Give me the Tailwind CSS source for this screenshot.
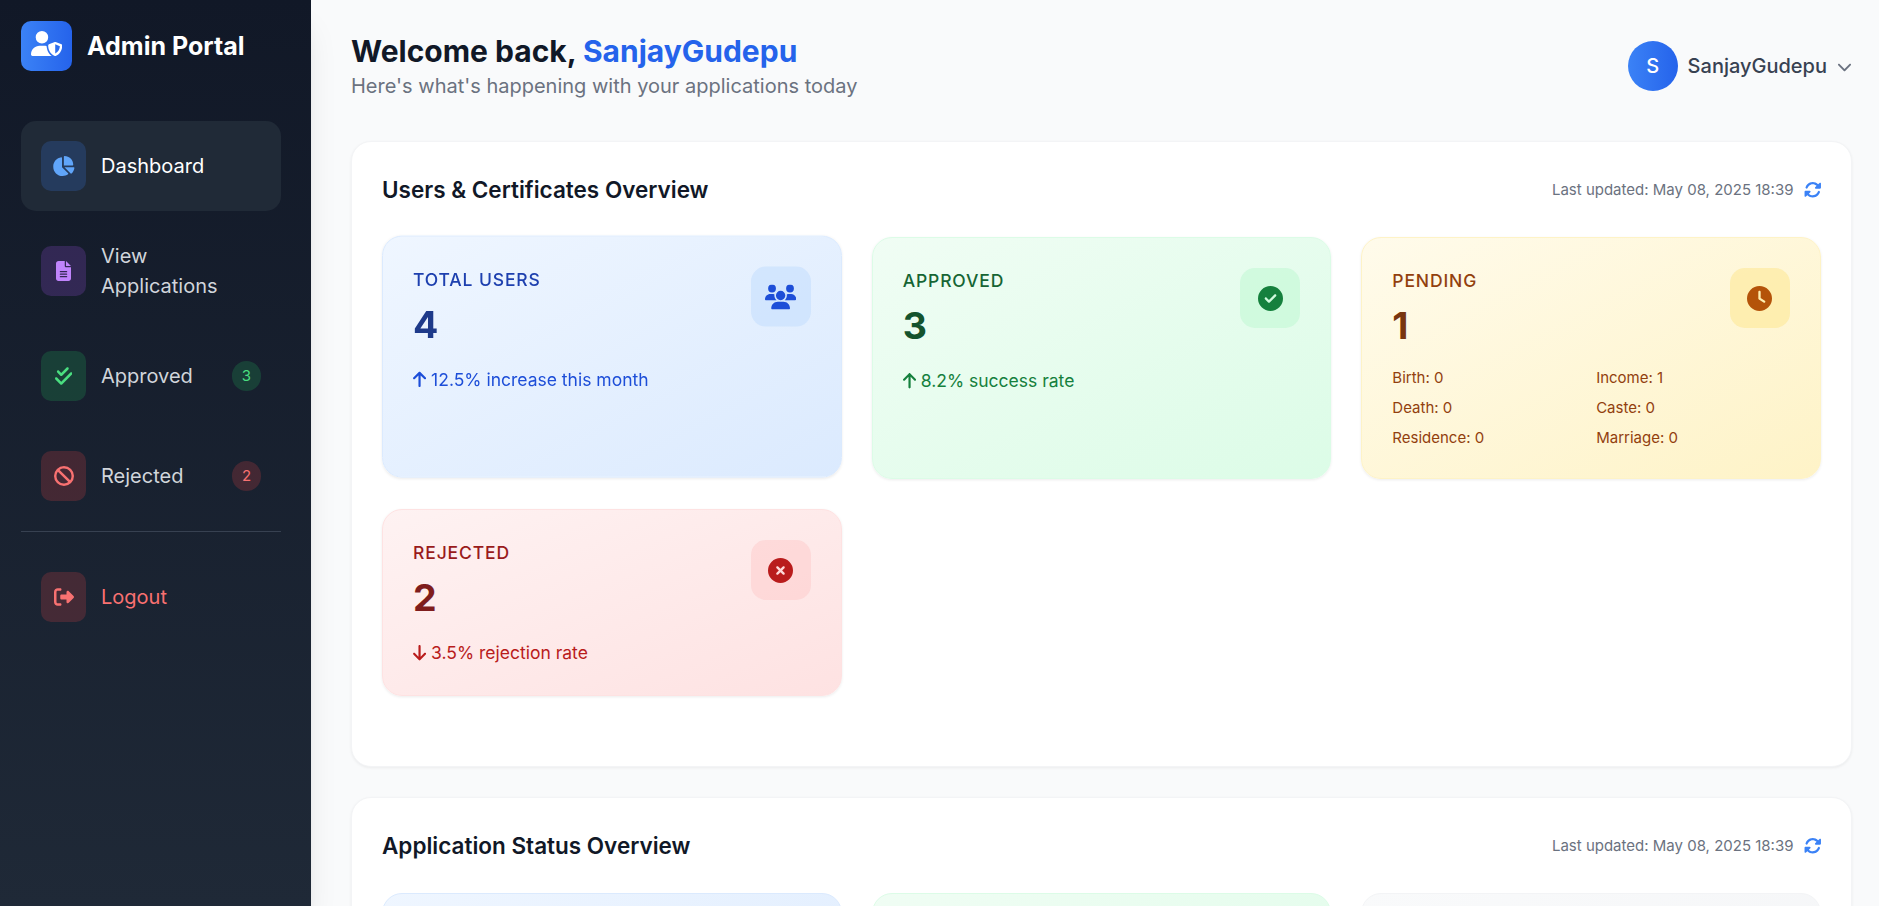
<!DOCTYPE html>
<html lang="en" class="text-[20px]">
<head>
<meta charset="utf-8">
<title>Admin Portal</title>
<script src="https://cdn.jsdelivr.net/npm/@tailwindcss/browser@4"></script>
</head>
<body class="flex h-[906px] overflow-hidden bg-[#f9fafb] font-[Inter,sans-serif] text-[20px] leading-[30px]">
<svg class="hidden">
  <symbol id="rotate" viewBox="0 0 512 512"><path d="M142.900 142.900c62.200-62.200 162.700-62.500 225.300-1L327 183c-6.900 6.900-8.900 17.200-5.200 26.200s12.500 14.800 22.200 14.800H472c13.300 0 24-10.700 24-24V72c0-9.700-5.800-18.500-14.800-22.200s-19.300-1.700-26.200 5.200L413.400 96.600c-87.600-86.500-228.700-86.200-315.800 1C73.200 122 55.600 150.700 44.800 181.400c-5.900 16.700 2.900 34.900 19.500 40.800s34.900-2.900 40.800-19.500c7.700-21.800 20.200-42.300 37.800-59.800zM16 312V440c0 9.700 5.800 18.500 14.800 22.200s19.300 1.700 26.200-5.200l41.600-41.600c87.600 86.500 228.700 86.200 315.800-1c24.400-24.400 42.100-53.100 52.900-83.700c5.900-16.700-2.900-34.900-19.500-40.800s-34.900 2.900-40.800 19.500c-7.700 21.800-20.200 42.300-37.800 59.800c-62.200 62.200-162.700 62.500-225.300 1L185 329c6.900-6.900 8.900-17.200 5.200-26.200s-12.500-14.800-22.200-14.800H40c-13.300 0-24 10.700-24 24z"/></symbol>
  <symbol id="arrow-up" viewBox="0 0 384 512"><path d="M214.600 41.400c-12.500-12.500-32.800-12.500-45.300 0l-160 160c-12.500 12.500-12.500 32.800 0 45.300s32.800 12.500 45.300 0L160 141.200V448c0 17.700 14.300 32 32 32s32-14.300 32-32V141.200L329.400 246.600c12.500 12.500 32.800 12.500 45.300 0s12.500-32.800 0-45.300l-160-160z"/></symbol>
</svg>

<aside class="relative z-10 flex h-full w-[311px] shrink-0 flex-col bg-linear-to-b/srgb from-[#111827] to-[#1f2937] pt-[21px] pr-[30px] pl-[21px] shadow-[0_25px_31px_-6px_rgba(0,0,0,0.1),0_10px_12px_-7px_rgba(0,0,0,0.1)]">
  <div class="flex items-center gap-[15px]">
    <div class="h-[50px] w-[51px] rounded-[10px] bg-linear-to-r/srgb from-[#3b82f6] to-[#2563eb] p-2">
      <svg class="h-[25px] w-[31.25px] text-white" viewBox="0 0 640 512" fill="currentColor"><path d="M224 256A128 128 0 1 0 224 0a128 128 0 1 0 0 256zm-45.700 48C79.800 304 0 383.800 0 482.300C0 498.700 13.300 512 29.700 512H418.300c1.800 0 3.500-.2 5.300-.5c-76.300-55.100-99.800-141-103.100-200.200c-16.100-4.800-33.100-7.300-50.700-7.300H178.300zm308.800-78.300l-120 48C358 277.400 352 286.200 352 296c0 63.300 25.900 168.800 134.800 214.200c5.900 2.500 12.600 2.500 18.500 0C614.100 464.800 640 359.300 640 296c0-9.800-6-18.600-15.100-22.300l-120-48c-5.700-2.300-12.100-2.300-17.800 0zM591.400 312c-3.900 50.700-27.200 116.700-95.400 149.700V273.800L591.400 312z"/></svg>
    </div>
    <span class="text-[25px] leading-[35px] font-bold whitespace-nowrap text-white">Admin Portal</span>
  </div>

  <nav class="mt-[50px] flex flex-col gap-2">
    <a class="flex items-center rounded-[15px] bg-[#202a37] p-4">
      <span class="flex h-[50px] w-[45px] items-center justify-center rounded-[10px] bg-[#3b82f6]/20 text-[#60a5fa]">
        <svg class="h-[20px] w-[22.5px]" viewBox="0 0 576 512" fill="currentColor"><path d="M304 240V16.600c0-9 7-16.600 16-16.600C443.700 0 544 100.300 544 224c0 9-7.600 16-16.600 16H304zM32 272C32 150.700 122.100 50.300 239 34.300c9.200-1.300 17 6.100 17 15.400V288L412.500 444.500c6.700 6.700 6.200 17.700-1.500 23.100C371.800 495.600 323.800 512 272 512C139.500 512 32 404.600 32 272zm526.400 16c9.300 0 16.600 7.800 15.400 17c-7.700 55.900-34.600 105.600-73.900 142.300c-6 5.600-15.400 5.200-21.200-.7L320 288H558.400z"/></svg>
      </span>
      <span class="ml-3 text-white">Dashboard</span>
    </a>
    <a class="flex items-center rounded-[15px] p-4">
      <span class="flex h-[50px] w-[45px] shrink-0 items-center justify-center rounded-[10px] bg-[#a855f7]/20 text-[#c084fc]">
        <svg class="h-[20px] w-[15px]" viewBox="0 0 384 512" fill="currentColor"><path d="M64 0C28.700 0 0 28.700 0 64V448c0 35.300 28.700 64 64 64H320c35.300 0 64-28.700 64-64V160H256c-17.700 0-32-14.300-32-32V0H64zM256 0V128H384L256 0zM112 256H272c8.800 0 16 7.200 16 16s-7.200 16-16 16H112c-8.800 0-16-7.200-16-16s7.200-16 16-16zm0 64H272c8.800 0 16 7.200 16 16s-7.200 16-16 16H112c-8.800 0-16-7.200-16-16s7.200-16 16-16zm0 64H272c8.800 0 16 7.200 16 16s-7.200 16-16 16H112c-8.800 0-16-7.200-16-16s7.200-16 16-16z"/></svg>
      </span>
      <span class="ml-3 text-[#d1d5db]">View<br>Applications</span>
    </a>
    <a class="flex items-center rounded-[15px] p-4">
      <span class="flex h-[50px] w-[45px] items-center justify-center rounded-[10px] bg-[#22c55e]/20 text-[#4ade80]">
        <svg class="h-[20px] w-[17.5px]" viewBox="0 0 448 512" fill="currentColor"><path d="M342.600 86.600c12.500-12.500 12.500-32.800 0-45.300s-32.800-12.500-45.300 0L160 178.700l-57.400-57.400c-12.500-12.500-32.800-12.500-45.300 0s-12.500 32.800 0 45.300l80 80c12.500 12.500 32.800 12.500 45.300 0l160-160zm96 128c12.500-12.500 12.500-32.800 0-45.300s-32.800-12.500-45.300 0L160 402.700 54.600 297.400c-12.500-12.500-32.800-12.500-45.300 0s-12.500 32.800 0 45.300l128 128c12.500 12.500 32.800 12.500 45.300 0l256-256z"/></svg>
      </span>
      <span class="ml-3 text-[#d1d5db]">Approved</span>
      <span class="ml-auto flex h-[30px] w-[29px] items-center justify-center rounded-full bg-[#22c55e]/20 text-[15px] text-[#4ade80]">3</span>
    </a>
    <a class="flex items-center rounded-[15px] p-4">
      <span class="flex h-[50px] w-[45px] items-center justify-center rounded-[10px] bg-[#ef4444]/20 text-[#f87171]">
        <svg class="size-[20px]" viewBox="0 0 512 512" fill="currentColor"><path d="M367.200 412.500L99.500 144.800C77.100 176.100 64 214.500 64 256c0 106 86 192 192 192c41.500 0 79.900-13.100 111.200-35.500zm45.300-45.300C434.900 335.900 448 297.500 448 256c0-106-86-192-192-192c-41.500 0-79.900 13.100-111.200 35.500L412.500 367.200zM0 256a256 256 0 1 1 512 0A256 256 0 1 1 0 256z"/></svg>
      </span>
      <span class="ml-3 text-[#d1d5db]">Rejected</span>
      <span class="ml-auto flex h-[30px] w-[29px] items-center justify-center rounded-full bg-[#ef4444]/20 text-[15px] text-[#f87171]">2</span>
    </a>
  </nav>

  <div class="mt-2 border-t border-[#374151] pt-4">
    <a class="flex items-center rounded-[15px] p-4">
      <span class="flex h-[50px] w-[45px] items-center justify-center rounded-[10px] bg-[#ef4444]/20 text-[#f87171]">
        <svg class="size-[20px]" viewBox="0 0 512 512" fill="currentColor"><path d="M377.900 105.900L500.700 228.700c7.200 7.200 11.300 17.100 11.300 27.300s-4.100 20.100-11.300 27.300L377.900 406.100c-6.400 6.400-15 9.900-24 9.900c-18.700 0-33.900-15.200-33.900-33.900l0-62.100-128 0c-17.700 0-32-14.300-32-32l0-64c0-17.700 14.300-32 32-32l128 0 0-62.100c0-18.700 15.200-33.900 33.900-33.900c9 0 17.600 3.600 24 9.900zM160 96L96 96c-17.700 0-32 14.300-32 32l0 256c0 17.700 14.300 32 32 32l64 0c17.700 0 32 14.300 32 32s-14.300 32-32 32l-64 0c-53 0-96-43-96-96L0 128C0 75 43 32 96 32l64 0c17.700 0 32 14.300 32 32s-14.300 32-32 32z"/></svg>
      </span>
      <span class="ml-3 text-[#f87171]">Logout</span>
    </a>
  </div>
</aside>

<main class="flex min-w-0 flex-1 flex-col pt-[31px] pr-[27px] pl-[40px]">
  <header class="flex shrink-0 items-center justify-between">
    <div>
      <h1 class="text-[30px] leading-[40px] font-bold text-[#111827]">Welcome back, <span class="text-[#2563eb]">SanjayGudepu</span></h1>
      <p class="text-[#6b7280]">Here's what's happening with your applications today</p>
    </div>
    <div class="flex items-center gap-2">
      <div class="flex size-[50px] items-center justify-center rounded-full bg-linear-to-r/srgb from-[#3b82f6] to-[#2563eb] font-medium text-white">S</div>
      <span class="font-medium text-[#374151]">SanjayGudepu</span>
      <svg class="size-[15px] text-[#6b7280]" viewBox="0 0 512 512" fill="currentColor"><path d="M233.400 406.600c12.500 12.500 32.800 12.500 45.300 0l192-192c12.500-12.500 12.500-32.800 0-45.300s-32.800-12.500-45.300 0L256 338.700 86.600 169.400c-12.500-12.500-32.800-12.500-45.300 0s-12.500 32.800 0 45.300l192 192z"/></svg>
    </div>
  </header>

  <section class="mt-8 shrink-0 rounded-[20px] border border-[#f3f4f6] bg-white p-6 pb-[70px] shadow-[0_1px_3px_rgba(0,0,0,0.06)]">
    <div class="flex items-center justify-between">
      <h2 class="text-[22.5px] leading-[35px] font-semibold text-[#111827]">Users &amp; Certificates Overview</h2>
      <div class="flex items-center gap-2 text-[15px] leading-[20px] text-[#6b7280]">Last updated: May 08, 2025 18:39
        <svg class="size-[17.5px] text-[#3b82f6]" fill="currentColor"><use href="#rotate"/></svg>
      </div>
    </div>
    <div class="mt-6 grid grid-cols-3 gap-6">
      <div class="-translate-y-[1.4px] rounded-[20px] border border-[#dbeafe] bg-linear-to-br/srgb from-[#eff6ff] to-[#dbeafe] p-6 shadow-[0_1px_3px_rgba(0,0,0,0.08)] will-change-transform">
        <div class="flex items-start justify-between">
          <div>
            <p class="text-[17.5px] leading-[25px] font-medium tracking-wider text-[#1e40af]">TOTAL USERS</p>
            <p class="mt-2 text-[37.5px] leading-[45px] font-bold text-[#1e3a8a]">4</p>
          </div>
          <div class="flex size-[60px] items-center justify-center rounded-[15px] bg-[#bfdbfe]/50 text-[#1d4ed8]">
            <svg class="h-[25px] w-[31.25px]" viewBox="0 0 640 512" fill="currentColor"><path d="M144 0a80 80 0 1 1 0 160A80 80 0 1 1 144 0zM512 0a80 80 0 1 1 0 160A80 80 0 1 1 512 0zM0 298.700C0 239.800 47.800 192 106.700 192h42.700c15.900 0 31 3.500 44.600 9.700c-1.300 7.200-1.900 14.700-1.900 22.300c0 38.200 16.800 72.500 43.300 96H21.300C9.600 320 0 310.400 0 298.700zM404.600 320c26.600-23.500 43.300-57.800 43.300-96c0-7.600-.7-15-1.900-22.300c13.600-6.300 28.700-9.700 44.600-9.700h42.700C592.200 192 640 239.800 640 298.700c0 11.800-9.600 21.300-21.300 21.300H404.600zM224 224a96 96 0 1 1 192 0 96 96 0 1 1 -192 0zM128 485.300C128 411.700 187.700 352 261.300 352H378.700C452.300 352 512 411.700 512 485.300c0 14.700-11.900 26.700-26.700 26.700H154.700c-14.700 0-26.700-11.900-26.700-26.700z"/></svg>
          </div>
        </div>
        <div class="mt-4 flex items-center gap-1 text-[17.5px] leading-[25px] text-[#1d4ed8]">
          <svg class="h-[17.5px] w-[13.1px]" fill="currentColor"><use href="#arrow-up"/></svg>12.5% increase this month
        </div>
      </div>

      <div class="rounded-[20px] border border-[#dcfce7] bg-linear-to-br/srgb from-[#f0fdf4] to-[#dcfce7] p-6 shadow-[0_1px_3px_rgba(0,0,0,0.08)]">
        <div class="flex items-start justify-between">
          <div>
            <p class="text-[17.5px] leading-[25px] font-medium tracking-wider text-[#166534]">APPROVED</p>
            <p class="mt-2 text-[37.5px] leading-[45px] font-bold text-[#14532d]">3</p>
          </div>
          <div class="flex size-[60px] items-center justify-center rounded-[15px] bg-[#bbf7d0]/50 text-[#15803d]">
            <svg class="size-[25px]" viewBox="0 0 512 512" fill="currentColor"><path d="M256 512A256 256 0 1 0 256 0a256 256 0 1 0 0 512zM369 209L241 337c-9.400 9.400-24.600 9.400-33.900 0l-64-64c-9.400-9.400-9.400-24.600 0-33.900s24.600-9.400 33.900 0l47 47L335 175c9.400-9.400 24.600-9.400 33.900 0s9.400 24.600 0 33.900z"/></svg>
          </div>
        </div>
        <div class="mt-4 flex items-center gap-1 text-[17.5px] leading-[25px] text-[#15803d]">
          <svg class="h-[17.5px] w-[13.1px]" fill="currentColor"><use href="#arrow-up"/></svg>8.2% success rate
        </div>
      </div>

      <div class="rounded-[20px] border border-[#fef3c7] bg-linear-to-br/srgb from-[#fffbeb] to-[#fef3c7] p-6 shadow-[0_1px_3px_rgba(0,0,0,0.08)]">
        <div class="flex items-start justify-between">
          <div>
            <p class="text-[17.5px] leading-[25px] font-medium tracking-wider text-[#92400e]">PENDING</p>
            <p class="mt-2 text-[37.5px] leading-[45px] font-bold text-[#78350f]">1</p>
          </div>
          <div class="flex size-[60px] items-center justify-center rounded-[15px] bg-[#fde68a]/50 text-[#b45309]">
            <svg class="size-[25px]" viewBox="0 0 512 512" fill="currentColor"><path d="M256 0a256 256 0 1 1 0 512A256 256 0 1 1 256 0zM232 120V256c0 8 4 15.500 10.700 20l96 64c11 7.400 25.900 4.400 33.300-6.700s4.400-25.900-6.700-33.300L280 243.200V120c0-13.300-10.700-24-24-24s-24 10.700-24 24z"/></svg>
          </div>
        </div>
        <div class="mt-4 grid grid-cols-2 gap-2 text-[15px] leading-[20px] text-[#92400e]">
          <span>Birth: 0</span><span>Income: 1</span>
          <span>Death: 0</span><span>Caste: 0</span>
          <span>Residence: 0</span><span>Marriage: 0</span>
        </div>
      </div>

      <div class="rounded-[20px] border border-[#fee2e2] bg-linear-to-br/srgb from-[#fef2f2] to-[#fee2e2] p-6 shadow-[0_1px_3px_rgba(0,0,0,0.08)]">
        <div class="flex items-start justify-between">
          <div>
            <p class="text-[17.5px] leading-[25px] font-medium tracking-wider text-[#991b1b]">REJECTED</p>
            <p class="mt-2 text-[37.5px] leading-[45px] font-bold text-[#7f1d1d]">2</p>
          </div>
          <div class="flex size-[60px] items-center justify-center rounded-[15px] bg-[#fecaca]/50 text-[#b91c1c]">
            <svg class="size-[25px]" viewBox="0 0 512 512" fill="currentColor"><path d="M256 512A256 256 0 1 0 256 0a256 256 0 1 0 0 512zM175 175c9.400-9.400 24.600-9.400 33.900 0l47 47 47-47c9.400-9.400 24.600-9.400 33.900 0s9.400 24.600 0 33.900l-47 47 47 47c9.400 9.400 9.400 24.600 0 33.900s-24.600 9.400-33.900 0l-47-47-47 47c-9.400 9.400-24.600 9.400-33.900 0s-9.400-24.600 0-33.900l47-47-47-47c-9.400-9.400-9.400-24.600 0-33.900z"/></svg>
          </div>
        </div>
        <div class="mt-4 flex items-center gap-1 text-[17.5px] leading-[25px] text-[#b91c1c]">
          <svg class="h-[17.5px] w-[13.1px] rotate-180" fill="currentColor"><use href="#arrow-up"/></svg>3.5% rejection rate
        </div>
      </div>
    </div>
  </section>

  <section class="mt-6 shrink-0 rounded-[20px] border border-[#f3f4f6] bg-white p-6 shadow-[0_1px_3px_rgba(0,0,0,0.06)]">
    <div class="flex items-center justify-between">
      <h2 class="text-[22.5px] leading-[35px] font-semibold text-[#111827]">Application Status Overview</h2>
      <div class="flex items-center gap-2 text-[15px] leading-[20px] text-[#6b7280]">Last updated: May 08, 2025 18:39
        <svg class="size-[17.5px] text-[#3b82f6]" fill="currentColor"><use href="#rotate"/></svg>
      </div>
    </div>
    <div class="mt-6 grid grid-cols-3 gap-6">
      <div class="h-[187px] rounded-[20px] border border-[#dbeafe] bg-linear-to-br/srgb from-[#eff6ff] to-[#dbeafe]"></div>
      <div class="h-[187px] rounded-[20px] border border-[#dcfce7] bg-linear-to-br/srgb from-[#f0fdf4] to-[#dcfce7]"></div>
      <div class="h-[187px] rounded-[20px] border border-[#f3f4f6] bg-linear-to-br/srgb from-[#f9fafb] to-[#f3f4f6]"></div>
    </div>
  </section>
</main>
</body>
</html>
